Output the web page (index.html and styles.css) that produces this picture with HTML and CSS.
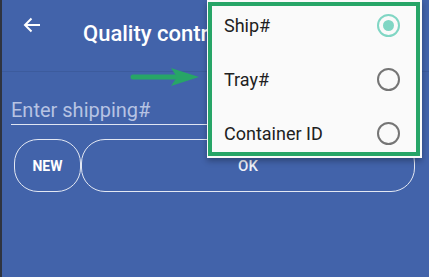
FILE: index.html
```html
<!DOCTYPE html>
<html lang="en">
<head>
    <meta charset="UTF-8">
    <meta name="viewport" content="width=device-width, initial-scale=1.0">
    <title>Quality control</title>
    <link rel="stylesheet" href="styles.css">
</head>
<body>
    <div class="screen">
        <div class="toolbar">
            <svg class="back" width="18" height="16" viewBox="0 0 18 16">
                <path d="M17 8H2M8.5 1.5L2 8l6.5 6.5" fill="none" stroke="#fff" stroke-width="2"/>
            </svg>
            <div class="title">Quality control</div>
        </div>
        <div class="content">
            <div class="field">Enter shipping#</div>
            <div class="buttons">
                <button class="btn btn-new">NEW</button>
                <button class="btn btn-ok">OK</button>
            </div>
        </div>

        <!-- annotation arrow -->
        <svg class="pointer" width="72" height="20" viewBox="0 0 72 20">
            <path d="M4 10H46" stroke="#27a567" stroke-width="5" stroke-linecap="round"/>
            <path d="M42 1L70 10L42 19L48 10Z" fill="#27a567"/>
        </svg>

        <div class="menu">
            <div class="menu-inner">
                <div class="item">
                    <span>Ship#</span>
                    <span class="radio checked"></span>
                </div>
                <div class="item">
                    <span>Tray#</span>
                    <span class="radio"></span>
                </div>
                <div class="item">
                    <span>Container ID</span>
                    <span class="radio"></span>
                </div>
            </div>
        </div>
    </div>
</body>
</html>
```

FILE: styles.css
```css
body {
    margin: 0;
    font-family: 'Roboto', 'Noto Sans', sans-serif;
    background-color: #4263aa;
}
.screen {
    position: relative;
    width: 427px;
    height: 277px;
    border-left: 2px solid #2f3440;
    background-color: #4263aa;
    overflow: hidden;
}
.toolbar {
    display: flex;
    align-items: flex-start;
    height: 72px;
    border-bottom: 1px solid #3c5b9d;
    box-sizing: border-box;
    padding-left: 21px;
}
.back {
    display: block;
    margin-top: 17px;
}
.title {
    margin-left: 42px;
    margin-top: 21px;
    color: #fff;
    font-size: 22px;
    line-height: 26px;
    font-weight: 500;
    white-space: nowrap;
}
.content {
    padding: 26px 14px 0 9px;
}
.field {
    font-size: 20px;
    line-height: 24px;
    color: #b7c3e3;
    padding-bottom: 2px;
    border-bottom: 1px solid #dfe5f3;
}
.buttons {
    display: flex;
    margin-top: 14px;
    padding-left: 3px;
}
.btn {
    height: 53px;
    border: 1px solid #e3e8f3;
    border-radius: 24px;
    background: transparent;
    color: #fff;
    font-family: inherit;
    font-size: 14px;
}
.btn-new {
    width: 67px;
    font-weight: 700;
}
.btn-ok {
    flex: 1;
    padding-top: 1px;
    font-size: 15px;
    font-weight: 500;
    color: #eef1f8;
}
.pointer {
    position: absolute;
    left: 127px;
    top: 67px;
}
.menu {
    position: absolute;
    top: 0;
    left: 205px;
    width: 215px;
    height: 158px;
    box-sizing: border-box;
    padding: 2px 2px 2px 1px;
    background-color: #fafafa;
    box-shadow: 0 3px 6px rgba(0, 0, 0, 0.3);
}
.menu-inner {
    height: 100%;
    box-sizing: border-box;
    border: 4px solid #27a567;
    display: flex;
    flex-direction: column;
    gap: 16px;
    padding: 0 16px 0 12px;
}
.item {
    display: flex;
    align-items: center;
    justify-content: space-between;
    height: 38px;
    font-size: 18px;
    color: #212121;
}
.radio {
    width: 19px;
    height: 19px;
    border: 2px solid #757575;
    border-radius: 50%;
    position: relative;
}
.radio.checked {
    border-color: #80d6c4;
}
.radio.checked::after {
    content: '';
    position: absolute;
    left: 4px;
    top: 4px;
    width: 11px;
    height: 11px;
    border-radius: 50%;
    background-color: #80d6c4;
}
```
